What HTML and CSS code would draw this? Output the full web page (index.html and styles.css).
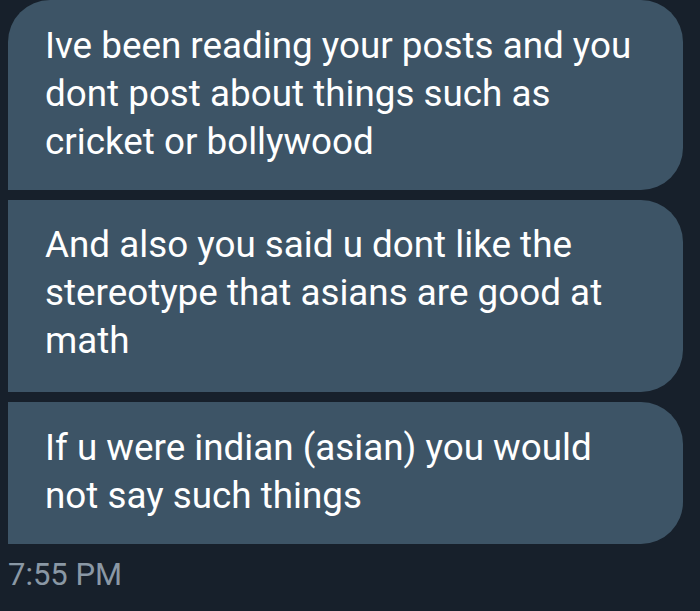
FILE: index.html
```html
<!DOCTYPE html>
<html>
<head>
<meta charset="utf-8">
<link rel="stylesheet" href="styles.css">
</head>
<body>
<div class="thread">
  <div class="bubble first">Ive been reading your posts and you dont post about things such as cricket or bollywood</div>
  <div class="bubble middle">And also you said u dont like the stereotype that asians are good at math</div>
  <div class="bubble">If u were indian (asian) you would not say such things</div>
  <div class="time">7:55 PM</div>
</div>
</body>
</html>
```
FILE: styles.css
```css
html, body {
  margin: 0;
  padding: 0;
  background: #17202b;
  width: 700px;
  height: 611px;
  overflow: hidden;
}
.thread {
  display: flex;
  flex-direction: column;
  gap: 10px;
  padding-left: 8px;
  width: 675px;
}
.bubble {
  background: #3d5466;
  color: #ffffff;
  font-family: Roboto, "Noto Sans", sans-serif;
  font-size: 36.8px;
  line-height: 48px;
  padding: 21.5px 30px 24px 37px;
  border-radius: 0 42px 42px 0;
}
.bubble.first {
  border-radius: 42px 42px 42px 0;
}
.bubble.middle {
  padding-bottom: 27px;
}
.time {
  color: #8a98a5;
  font-family: Roboto, "Noto Sans", sans-serif;
  font-size: 31px;
  line-height: 40px;
  margin-top: 1px;
}
```
